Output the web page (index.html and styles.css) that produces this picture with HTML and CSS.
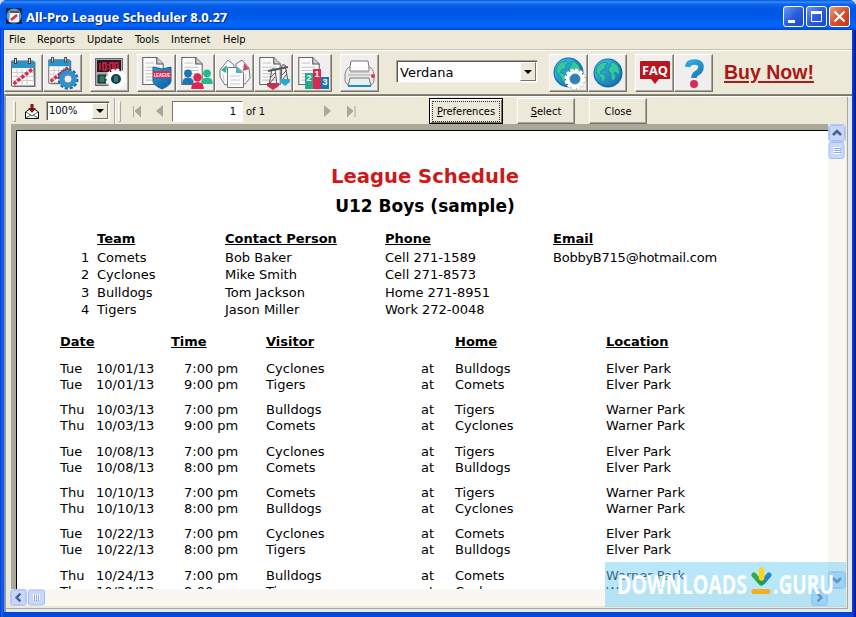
FILE: index.html
```html
<!DOCTYPE html>
<html lang="en">
<head>
<meta charset="utf-8">
<title>All-Pro League Scheduler 8.0.27</title>
<link rel="stylesheet" href="styles.css">
</head>
<body>
<svg class="defs" width="0" height="0">
  <defs>
    <linearGradient id="blue" gradientUnits="userSpaceOnUse" x1="5" y1="3" x2="28" y2="30"><stop offset="0" stop-color="#35bce8"/><stop offset="1" stop-color="#1667ac"/></linearGradient>
    <symbol id="doc" viewBox="0 0 20 26"><path d="M.5.5h13l6 6v19H.5z" fill="#fafafa" stroke="#666"/><path d="M13.500.5v6h6" fill="#ccc" stroke="#555"/><path d="M3 5.500h8M3 9.500h13M3 12.500h13M3 15.500h13M3 18.500h13M3 21.500h13" stroke="#c4c4c4"/></symbol>
    <symbol id="cal" viewBox="0 0 26 32"><path d="M3 5h22v25H3z" fill="#777"/><path d="M1 4h22l1 25H1z" fill="#fafafa" stroke="#666"/><path d="M1 4h23v7H1z" fill="#2b92ca"/><path d="M5 1v6M19 1v6" stroke="#444" stroke-width="3"/><path d="M5 2v4M19 2v4" stroke="#ddd"/><path d="M2 15.500h21M2 19.500h21M2 23.500h21M6.500 12v17M11.500 12v17M16.500 12v17" stroke="#ccc"/><path d="M3 27L22 12" stroke="#d8284d" stroke-width="3.500" stroke-dasharray="3.500 1.500"/></symbol>
    <symbol id="globe" viewBox="0 0 30 30"><circle cx="15" cy="15" r="14.500" fill="#146fa9"/><circle cx="14.500" cy="14.500" r="13" fill="url(#blue)"/><path d="M4 9l4-4 5-1 2 2-3 2 1 3-4 1-2 3 3 1 3 2-1 3-3 4-1-5-3-4-2-2zM17 6l3-2 5 4 2 6-2 3-2-3-2 1 2 3-2 5-3-2 0-6-3-2 1-4 2-1z" fill="#33c8a2" stroke="#14867f" stroke-width=".7"/></symbol>
    <symbol id="person" viewBox="0 0 13 17"><circle cx="6.500" cy="4.500" r="4.200"/><path d="M.2 16q0-7 6.300-7t6.300 7z"/></symbol>
    <symbol id="down" viewBox="0 0 18 18"><rect x=".5" y=".5" width="17" height="17" rx="2" fill="#fff" stroke="#b4c8f0"/><rect x="1.500" y="1.500" width="15" height="15" rx="2" fill="#c6d6fc" stroke="#a9c0ee"/><path d="M5 7l4 4 4-4" fill="none" stroke="#4d6185" stroke-width="2.600"/></symbol>
  </defs>
</svg>
<div class="window">
  <header class="titlebar">
    <svg class="app-icon" width="16" height="16"><path d="M0 0h16v16H0z" fill="#12284e"/><circle cx="8" cy="8" r="7.500" fill="#5a9bc5"/><path d="M4 3h9v11H3z" fill="#eef"/><path d="M4 3h9v2H4z" fill="#555"/><path d="M5 12l6-5" stroke="#d33" stroke-width="2.500"/></svg>
    <h1 class="title">All-Pro League Scheduler 8.0.27</h1>
    <div class="controls">
      <span class="ctl"><svg width="21" height="21"><path d="M5 14h7v3H5z" fill="#fff"/></svg></span>
      <span class="ctl"><svg width="21" height="21"><path d="M5.500 5.500h10v10h-10z" fill="none" stroke="#fff"/><path d="M5 5h11v3H5z" fill="#fff"/></svg></span>
      <span class="ctl close"><svg width="21" height="21"><path d="M5.500 5.500l10 10M15.500 5.500l-10 10" stroke="#fff" stroke-width="2.200"/></svg></span>
    </div>
  </header>
  <nav class="menubar"><span class="m-file">File</span><span class="m-reports">Reports</span><span class="m-update">Update</span><span class="m-tools">Tools</span><span class="m-net">Internet</span><span>Help</span></nav>

  <div class="toolbar">
    <div class="group">
      <span class="tool"><svg width="36" height="36"><use href="#cal" x="4" y="2" width="27" height="32"/></svg></span>
      <span class="tool"><svg width="36" height="36"><use href="#cal" x="2" y="1" width="26" height="30"/><circle cx="23" cy="24" r="9" fill="none" stroke="#23699a" stroke-width="3" stroke-dasharray="3 1.700"/><circle cx="23" cy="24" r="6.500" fill="#e9eef0" stroke="#2f92ca" stroke-width="4.500"/><circle cx="23" cy="24" r="4" fill="#eee" stroke="#285f86" stroke-width=".7"/></svg></span>
    </div>
    <div class="group">
      <span class="tool"><svg width="36" height="36"><path d="M3.500 3.500h27v27h-27z" fill="#aaa9ab" stroke="#65656b"/><path d="M5 5h24v12H5z" fill="#291923"/><path d="M8 8v7M11 8h3v7h-3zM16 9v1M16 13v1M18 8h3v7h-3zM23 8h3v7h-3z" fill="none" stroke="#e91d43" stroke-width="1.500"/><path d="M6 20h8v8H6z" fill="#185945" stroke="#1b2928"/><path d="M8 22h4M8 24h4M8 26h4" stroke="#32a775"/><circle cx="24" cy="24" r="9" fill="none" stroke="#fff" stroke-width="3" stroke-dasharray="3 1.700"/><circle cx="24" cy="24" r="7" fill="#193948" stroke="#fff" stroke-width="4"/><path d="M22 21h4v6h-4z" fill="#2c7780"/></svg></span>
    </div>
    <div class="group">
      <span class="tool"><svg width="36" height="36"><use href="#doc" x="3" y="2" width="22" height="28"/><path d="M14 12l9 2 9-2v14q0 4-9 8-9-4-9-8z" fill="url(#blue)" stroke="#1b6393"/><path d="M14 16h18v7H14z" fill="#d32e50"/><text x="15" y="21.500" class="shield" textLength="16" lengthAdjust="spacingAndGlyphs">LEAGUE</text></svg></span>
      <span class="tool"><svg width="36" height="36"><use href="#doc" x="3" y="2" width="22" height="28"/><use href="#person" x="4" y="14" width="12" height="16" fill="#1976b6"/><use href="#person" x="23" y="14" width="12" height="16" fill="#25b98d"/><use href="#person" x="13" y="18" width="13" height="17" fill="#dc2751"/></svg></span>
      <span class="tool"><svg width="36" height="36"><path d="M3 15L11 5l6 5v18l-9 2-5-8zM19 9l6-4 7 8 1 10-5 6-8-2z" fill="#fafafa" stroke="#777"/><path d="M4 15l6-5-1 8z" fill="#35ad99"/><path d="M27 8l5 6-6 2z" fill="#d3435d"/><path d="M10.500 12.500h10l6 5v15h-16z" fill="#fafafa" stroke="#777"/><path d="M19 12v6h7z" fill="#4cacd5"/><path d="M13 21h10M13 25h10M13 29h10M6 19l1 7M29 19l-1 7" stroke="#ccc"/></svg></span>
      <span class="tool"><svg width="36" height="36"><use href="#doc" x="3" y="2" width="22" height="28"/><path d="M13 30l3-16h3l2 16M15 22l4-4M14 28l5-6M25 26l1-16h3l3 16M26 20l5-5M26 25l5-6" fill="none" stroke="#555"/><path d="M12 16l20-4" stroke="#555" stroke-width="2"/><path d="M11 28h12v3l-6 4-6-4z" fill="#ca2f4d"/><path d="M24 24h10v3l-5 4-5-4z" fill="#28a9d5"/></svg></span>
      <span class="tool"><svg width="36" height="36"><use href="#doc" x="3" y="2" width="22" height="28"/><path d="M10 18h8v16h-8z" fill="#27a888"/><path d="M18 14h8v20h-8z" fill="#dc2850"/><path d="M26 22h8v12h-8z" fill="#1777b5"/><g class="podium"><text x="11.500" y="26">2</text><text x="19.500" y="22">1</text><text x="27.500" y="30">3</text></g></svg></span>
    </div>
    <div class="group printer">
      <span class="tool"><svg width="36" height="36"><path d="M9 6h17l2 12H7z" fill="#fff" stroke="#777"/><path d="M8 12q-4 1-5 7v7q1 4 4 4h21q4-1 4-4v-7q-1-6-5-7v4H8z" fill="#e9e9e9" stroke="#888"/><path d="M8 17h19M6 20h23" stroke="#aaa"/><path d="M8 23h19l2 8H6z" fill="#e4f0f4" stroke="#777"/><path d="M6 31h23" stroke="#248dc0" stroke-width="2"/><circle cx="31" cy="21" r="2" fill="#db3658"/></svg></span>
    </div>
    <div class="combo font-combo"><span>Verdana</span><i class="arrow"></i></div>
    <div class="group">
      <span class="tool"><svg width="36" height="36"><use href="#globe" x="2" y="2" width="31" height="31"/><circle cx="24" cy="24" r="9" fill="none" stroke="#7c98a8" stroke-width="3.500" stroke-dasharray="3.400 1.300"/><circle cx="24" cy="24" r="9" fill="none" stroke="#fff" stroke-width="3" stroke-dasharray="3 1.700"/><circle cx="24" cy="24" r="7" fill="#2586bd" stroke="#fff" stroke-width="4"/><circle cx="24" cy="24" r="5" fill="none" stroke="#5a7b8d"/></svg></span>
      <span class="tool"><svg width="36" height="36"><use href="#globe" x="3" y="3" width="30" height="30"/></svg></span>
    </div>
    <div class="group">
      <span class="tool"><svg width="36" height="36"><path d="M4 6h28q1 0 1 1v17H22l-4 5-4-5H3V7q0-1 1-1z" fill="#b91520"/><text x="5" y="20" class="faq" textLength="26" lengthAdjust="spacingAndGlyphs">FAQ</text></svg></span>
      <span class="tool"><svg width="36" height="36"><path d="M11.500 12q.5-5 7-5t6.500 5q0 4-4 6-3 1.500-3 5" fill="none" stroke="url(#blue)" stroke-width="5.500"/><circle cx="18" cy="29" r="4" fill="#d62b55"/></svg></span>
    </div>
    <a class="buy">Buy Now!</a>
  </div>

  <main class="panel">
    <div class="report-bar">
      <i class="grip"></i>
      <svg class="export" width="14" height="15"><path d="M.500 14.500V8L4 5.500h6L13.500 8v6.500z" fill="#fff" stroke="#000"/><path d="M1 8l6 4 6-4M1 14l5-3M13 14l-5-3" fill="none" stroke="#376769"/><path d="M5.500 0h3v4h2.500L7 9 3 4h2.500z" fill="#8d1016"/></svg>
      <div class="combo zoom"><span>100%</span><i class="arrow"></i></div>
      <i class="sep"></i><i class="grip"></i>
      <svg class="nav first" width="9" height="12"><path d="M1.500 1v11M9 1L3 6l6 6z" fill="#aca899" stroke="#aca899"/></svg>
      <svg class="nav prev" width="7" height="12"><path d="M7 0L0 6l7 6z" fill="#aca899"/></svg>
      <div class="page-no">1</div><span class="of">of 1</span>
      <svg class="nav next" width="7" height="12"><path d="M0 0l7 6-7 6z" fill="#aca899"/></svg>
      <svg class="nav last" width="9" height="12"><path d="M0 1l6 5-6 6zM8 1v11" fill="#aca899" stroke="#aca899"/></svg>
      <button class="btn default"><span><u>P</u>references</span></button>
      <button class="btn select"><u>S</u>elect</button>
      <button class="btn">Close</button>
    </div>
    <div class="viewer">
      <section class="page">
        <h2>League Schedule</h2>
        <h3>U12 Boys (sample)</h3>
        <div class="teams">
          <b></b><b>Team</b><b>Contact Person</b><b>Phone</b><b>Email</b>
          <span>1</span><span>Comets</span><span>Bob Baker</span><span>Cell 271-1589</span><span class="email">BobbyB715@hotmail.com</span>
          <span>2</span><span>Cyclones</span><span>Mike Smith</span><span>Cell 271-8573</span><span></span>
          <span>3</span><span>Bulldogs</span><span>Tom Jackson</span><span>Home 271-8951</span><span></span>
          <span>4</span><span>Tigers</span><span>Jason Miller</span><span>Work 272-0048</span><span></span>
        </div>
        <div class="games head"><b>Date</b><b></b><b class="time">Time</b><b>Visitor</b><b></b><b>Home</b><b>Location</b></div>
        <div class="games"><span>Tue</span><span>10/01/13</span><span>7:00 pm</span><span>Cyclones</span><span>at</span><span>Bulldogs</span><span>Elver Park</span>
          <span>Tue</span><span>10/01/13</span><span>9:00 pm</span><span>Tigers</span><span>at</span><span>Comets</span><span>Elver Park</span></div>
        <div class="games"><span>Thu</span><span>10/03/13</span><span>7:00 pm</span><span>Bulldogs</span><span>at</span><span>Tigers</span><span>Warner Park</span>
          <span>Thu</span><span>10/03/13</span><span>9:00 pm</span><span>Comets</span><span>at</span><span>Cyclones</span><span>Warner Park</span></div>
        <div class="games"><span>Tue</span><span>10/08/13</span><span>7:00 pm</span><span>Cyclones</span><span>at</span><span>Tigers</span><span>Elver Park</span>
          <span>Tue</span><span>10/08/13</span><span>8:00 pm</span><span>Comets</span><span>at</span><span>Bulldogs</span><span>Elver Park</span></div>
        <div class="games"><span>Thu</span><span>10/10/13</span><span>7:00 pm</span><span>Comets</span><span>at</span><span>Tigers</span><span>Warner Park</span>
          <span>Thu</span><span>10/10/13</span><span>8:00 pm</span><span>Bulldogs</span><span>at</span><span>Cyclones</span><span>Warner Park</span></div>
        <div class="games"><span>Tue</span><span>10/22/13</span><span>7:00 pm</span><span>Cyclones</span><span>at</span><span>Comets</span><span>Elver Park</span>
          <span>Tue</span><span>10/22/13</span><span>8:00 pm</span><span>Tigers</span><span>at</span><span>Bulldogs</span><span>Elver Park</span></div>
        <div class="games"><span>Thu</span><span>10/24/13</span><span>7:00 pm</span><span>Bulldogs</span><span>at</span><span>Comets</span><span>Warner Park</span>
          <span>Thu</span><span>10/24/13</span><span>8:00 pm</span><span>Tigers</span><span>at</span><span>Cyclones</span><span>Warner Park</span></div>
      </section>
      <div class="vscroll"><svg class="up" width="18" height="18"><use href="#down" width="18" height="18"/></svg><svg width="18" height="18"><rect x="1" y=".5" width="15" height="16" rx="2" fill="#c8d8fb" stroke="#a7bde9"/><path d="M5 5.500h7M5 7.500h7M5 9.500h7M5 11.500h7" stroke="#fff"/><path d="M6 6.500h7M6 8.500h7M6 10.500h7" stroke="#8caee8"/></svg><svg class="end" width="18" height="18"><use href="#down" width="18" height="18"/></svg></div>
    </div>
    <div class="hscroll"><svg class="left" width="17" height="17"><use href="#down" width="17" height="17"/></svg><svg width="17" height="17"><rect x=".5" y="1" width="16" height="15" rx="2" fill="#c8d8fb" stroke="#a7bde9"/><path d="M5.500 5v6M7.500 5v6M9.500 5v6M11.500 5v6" stroke="#fff"/><path d="M6.500 6v6M8.500 6v6M10.500 6v6" stroke="#8caee8"/></svg><svg class="right" width="17" height="17"><use href="#down" width="17" height="17"/></svg></div>
  </main>
  <svg class="watermark" width="241" height="45"><text x="12" y="31.500" textLength="130" lengthAdjust="spacingAndGlyphs">DOWNLOADS</text><path d="M149 13l7 8" stroke-width="5" stroke-linecap="round" stroke="#35aa4b"/><path d="M164 13l-6 7" stroke-width="5" stroke-linecap="round" stroke="#2389cf"/><path d="M156.500 8v10" stroke-width="5.500" stroke-linecap="round" stroke="#ffd51c"/><path d="M151 16l5.500 8 5.500-8-5.500 3z" fill="#239b4b"/><path d="M149 29.500h14" stroke-width="5" stroke-linecap="round" stroke="#f2ae20"/><text x="168" y="31.500" textLength="61" lengthAdjust="spacingAndGlyphs">.GURU</text></svg>
</div>
</body>
</html>
```
FILE: styles.css
```css
* { box-sizing: border-box; }
body { margin: 0; overflow: hidden; background: #c8dcf5; }
svg { display: block; flex: none; }
.defs { position: absolute; }
i { flex: none; }

.window {
  position: relative;
  display: flex;
  flex-direction: column;
  width: 856px;
  height: 617px;
  padding: 0 4px 5px;
  overflow: hidden;
  border-radius: 7px 7px 0 0;
  background: linear-gradient(90deg, #0831c9, #1667f0 2px, #0148d8 4px, #0148d8 852px, #0831b9 854px, #001288);
  font: 11px/14px "DejaVu Sans Condensed", "DejaVu Sans", sans-serif;
  color: #000;
}

.titlebar {
  display: flex;
  align-items: center;
  flex: none;
  height: 30px;
  margin: 0 -4px;
  padding: 2px 6px 0;
  background: linear-gradient(#0753d4 0, #338df8 2px, #0d67ee 4px, #0057e5 9px, #0058ea 17px, #0067ff 25px, #0061f5 27px, #0045ce 30px);
}
.title { margin: 1px 0 0 4px; font: bold 13px/18px "Noto Sans", sans-serif; color: #fff; text-shadow: 1px 1px 1px #0b2a80; letter-spacing: 0; white-space: nowrap; }
.controls { display: flex; gap: 2px; margin-left: auto; }
.ctl { width: 21px; height: 21px; border: 1px solid #fff; border-radius: 3px; background: linear-gradient(135deg, #6f97f0, #2a5ce0 50%, #1c4bc9); }
.ctl svg { margin: -1px; }
.close { background: linear-gradient(135deg, #ec9b82, #d9502e 50%, #b93a1b); }

.menubar { display: flex; flex: none; height: 21px; padding: 3px 5px 0; background: #ece9d8; border-bottom: 1px solid #fff; box-shadow: inset 0 -1px #c5c2b2; }
.menubar span { flex: none; line-height: 13px; }
.m-file { width: 28px; }
.m-reports { width: 50px; }
.m-update { width: 48px; }
.m-tools { width: 36px; }
.m-net { width: 52px; }

.toolbar { display: flex; flex: none; height: 43px; padding: 3px 0 0; background: #ece9d8; }
.group { display: flex; margin-right: 8px; }
.tool { width: 39px; height: 38px; padding: 1px; background: #f0efed; border: 1px solid; border-color: #fff #77746a #77746a #fff; box-shadow: inset -1px -1px #aca899; }
.tool svg { margin: -1px 0 0 0; }
.printer { margin-right: 17px; }
.shield { font: bold 5px "Liberation Sans", sans-serif; fill: #fff; }
.podium { font: bold 9px "Liberation Sans", sans-serif; fill: #fff; }
.faq { font: bold 13px "Open Sans", sans-serif; fill: #fff; }
.combo { display: flex; justify-content: space-between; align-items: stretch; background: #fff; border: 1px solid; border-color: #aca899 #f5f3ea #f5f3ea #aca899; box-shadow: inset 1px 1px #555; padding: 1px; }
.font-combo { width: 142px; height: 23px; margin: 6px 11px 0 0; font: 13px/21px "DejaVu Sans", sans-serif; }
.font-combo span { padding-left: 2px; }
.arrow { display: flex; align-items: center; justify-content: center; width: 16px; background: #ece9d8; border: 1px solid; border-color: #fff #77746a #77746a #fff; }
.arrow::after { content: ""; border: 4px solid transparent; border-top-color: #000; border-bottom: 0; }
.buy { margin: 6px 0 0 3px; font: bold 19.500px/25px "Liberation Sans", sans-serif; color: #a81818; text-decoration: underline; text-decoration-thickness: 2px; text-underline-offset: 2px; white-space: nowrap; }

.panel { flex: 1; min-height: 0; padding: 2px 6px 6px 5px; background: #ece9d8; border: 1px solid #88857a; border-width: 1px 0 0 2px; border-left-color: #8c97b0; box-shadow: inset 0 1px #77746a, inset 0 2px #fff, inset -4px -3px #e5e8ee, inset -5px -4px #aca899; }
.report-bar { display: flex; align-items: center; height: 27px; padding: 1px 0 0 2px; }
.grip { width: 3px; height: 21px; border: 1px solid; border-color: #fff #aca899 #aca899 #fff; }
.export { margin: 0 7px 0 9px; }
.zoom { width: 64px; height: 20px; line-height: 16px; }
.zoom span { padding-left: 1px; }
.sep { width: 1px; height: 26px; margin: 0 3px 0 4px; background: #aca899; box-shadow: 1px 0 #fff; }
.first { margin-left: 11px; }
.prev { margin: 0 9px 0 15px; }
.page-no { width: 71px; height: 21px; padding: 3px 6px 0 0; text-align: right; background: #fff; border: 1px solid; border-color: #77746a #fff #fff #77746a; }
.of { width: 81px; padding: 1px 0 0 3px; flex: none; }
.last { margin: 0 73px 0 16px; }
.btn { flex: none; width: 58px; height: 26px; margin: 0 0 0 14px; padding: 1px 0 0; font: inherit; color: #000; background: #ece9d8; border: 1px solid; border-color: #fff #77746a #77746a #fff; box-shadow: inset -1px -1px #aca899; border-radius: 0; }
.default { width: 74px; margin: 0; border-color: #000; box-shadow: inset 1px 1px #fff, inset -1px -1px #77746a; padding: 0; }
.default span { display: block; margin: 1px 2px; padding: 3px 0 2px; border: 1px dotted #333; }

.viewer { display: flex; height: 465px; background: #aca899; }
.page { flex: 1; min-width: 0; height: 459px; margin: 6px 0 0 5px; overflow: hidden; background: #fff; border: 1px solid #000; border-width: 1px 0 0 1px; font: 13px/16px "DejaVu Sans", sans-serif; }
.page h2 { margin: 34px 0 0 5px; font: bold 19.600px/24px "DejaVu Sans", sans-serif; color: #cc1a1a; text-align: center; }
.page h3 { margin: 6px 0 0 5px; font: bold 17px/22px "DejaVu Sans", sans-serif; text-align: center; }
.page b { text-decoration: underline; text-underline-offset: 1px; white-space: nowrap; }
.teams { display: grid; grid-template-columns: 16px 128px 160px 168px 200px; grid-template-rows: 19px; grid-auto-rows: 17.300px; margin: 14px 0 0 64px; }
.teams span { white-space: nowrap; }
.email { letter-spacing: -.24px; }
.games { display: grid; grid-template-columns: 36px 88px 82px 155px 34px 151px 150px; grid-auto-rows: 16px; margin: 0 0 9.300px 43px; white-space: nowrap; }
.head { margin-top: 15px; margin-bottom: 11px; }
.time { margin-left: -13px; }

.vscroll { display: flex; flex-direction: column; width: 18px; background: #f8f7f2; }
.up { transform: rotate(180deg); }
.end { margin-top: auto; }
.hscroll { display: flex; height: 17px; padding-right: 18px; background: #f8f7f2; }
.left { transform: rotate(90deg); margin: 0 1px 0 -1px; }
.right { transform: rotate(-90deg); margin-left: auto; }
.watermark { position: absolute; left: 605px; top: 562px; background: rgba(116, 208, 246, .5); }
.watermark text { font: bold 27px "Open Sans", sans-serif; fill: #fff; }
```
